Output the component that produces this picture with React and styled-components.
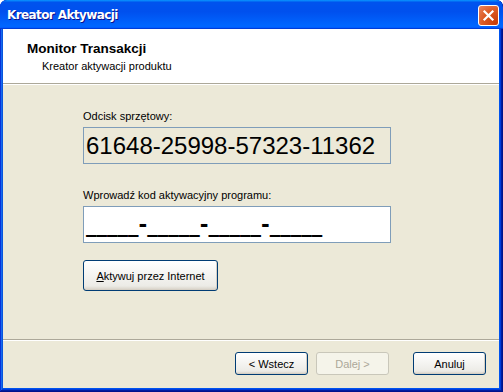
import styled, { createGlobalStyle } from "styled-components"

const Global = createGlobalStyle`
    html, body {
        margin: 0;
        background: #ffffff;
    }
    body {
        font-family: "Liberation Sans", Arial, sans-serif;
        font-size: 11px;
        color: #000;
    }
`

const Window = styled.div`
    width: 503px;
    height: 392px;
    box-sizing: border-box;
    display: flex;
    flex-direction: column;
    background: #0053ee;
    border-radius: 7px 7px 0 0;
    box-shadow: inset -1px -1px #00138c, inset 1px 1px #0831d9, inset -2px -2px #001ea0,
        inset 2px 2px #166aee, inset -3px -3px #003bda, inset 3px 3px #0855dd;
    overflow: hidden;
`

const TitleBar = styled.div`
    height: 29px;
    flex: none;
    display: flex;
    align-items: center;
    padding: 0 4px 0 7px;
    background: linear-gradient(180deg, #0997ff, #0053ee 8%, #0050ee 40%, #06f 88%, #06f 93%, #005bff 95%, #003dd7 96%, #003dd7);
    border-radius: 7px 7px 0 0;
`

const Title = styled.span`
    font-family: "DejaVu Sans", Verdana, sans-serif;
    font-weight: bold;
    font-size: 12px;
    letter-spacing: -0.6px;
    color: #fff;
    text-shadow: 1px 1px #0f1089;
    margin-top: 1px;
`

const Close = styled.div`
    margin-left: auto;
    width: 21px;
    height: 21px;
    box-sizing: border-box;
    border: 1px solid #fff;
    border-radius: 3px;
    background: radial-gradient(circle at 90% 90%, #c83c08 0%, #dc5a24 55%, #ea8560 100%);
    display: flex;
    align-items: center;
    justify-content: center;
    margin-top: 1px;
`

const Client = styled.div`
    flex: 1;
    margin: 0 4px 4px 3px;
    background: #ece9d8;
    display: flex;
    flex-direction: column;
`

const Header = styled.div`
    height: 55px;
    flex: none;
    box-sizing: border-box;
    background: #fff;
    border-bottom: 1px solid #aca899;
    box-shadow: 0 1px 0 #fff;
    padding: 12px 0 0 24px;
    margin-bottom: 1px;
`

const Heading = styled.div`
    font-weight: bold;
    font-size: 13.5px;
    line-height: 16px;
`

const Subheading = styled.div`
    font-size: 11px;
    line-height: 13px;
    margin: 3px 0 0 15px;
`

const Content = styled.div`
    flex: 1;
    display: flex;
    flex-direction: column;
    align-items: flex-start;
    padding: 25px 0 0 80px;
`

const Label = styled.div`
    font-size: 11px;
    line-height: 13px;
    margin-top: ${p => p.$gap || 0}px;
`

const CodeBox = styled.div`
    width: 308px;
    height: 37px;
    box-sizing: border-box;
    margin-top: 4px;
    border: 1px solid #7f9db9;
    background: ${p => (p.$editable ? "#fff" : "#ece9d8")};
    font-size: 24px;
    line-height: ${p => (p.$editable ? 33 : 35)}px;
    padding-left: 2px;
    white-space: pre;
    overflow: hidden;
`

const Mask = styled.span`
    font-family: "DejaVu Sans", Verdana, sans-serif;
    font-size: 21px;
    font-weight: bold;
`

const Button = styled.button`
    width: ${p => p.$w || 73}px;
    height: ${p => p.$h || 23}px;
    margin-left: ${p => p.$ml || 0}px;
    margin-top: ${p => p.$mt || 0}px;
    padding: 0;
    font-family: "Liberation Sans", Arial, sans-serif;
    font-size: 11px;
    color: ${p => (p.disabled ? "#aca899" : "#000")};
    border: 1px solid ${p => (p.disabled ? "#c9c7ba" : "#003c74")};
    border-radius: 3px;
    background: ${p =>
        p.disabled ? "#f5f4ea" : "linear-gradient(180deg, #fff, #ecebe6 86%, #d6d0c5)"};
    box-shadow: ${p => (p.disabled ? "none" : "inset -1px -1px #d6d0c5")};
`

const Footer = styled.div`
    height: 49px;
    flex: none;
    box-sizing: border-box;
    border-top: 1px solid #aca899;
    box-shadow: inset 0 1px 0 #fff;
    display: flex;
    align-items: flex-start;
    justify-content: flex-end;
    padding: 12px 13px 0 0;
`

const CloseIcon = () => (
    <svg width="13" height="13" viewBox="0 0 13 13">
        <path d="M2.5 2.5 L10.5 10.5 M10.5 2.5 L2.5 10.5" stroke="#fff" strokeWidth="2.2" strokeLinecap="square" />
    </svg>
)

export default function App() {
    return (
        <>
            <Global />
            <Window>
                <TitleBar>
                    <Title>Kreator Aktywacji</Title>
                    <Close><CloseIcon /></Close>
                </TitleBar>
                <Client>
                    <Header>
                        <Heading>Monitor Transakcji</Heading>
                        <Subheading>Kreator aktywacji produktu</Subheading>
                    </Header>
                    <Content>
                        <Label>Odcisk sprzętowy:</Label>
                        <CodeBox>61648-25998-57323-11362</CodeBox>
                        <Label $gap={25}>Wprowadź kod aktywacyjny programu:</Label>
                        <CodeBox $editable><Mask>_____-_____-_____-_____</Mask></CodeBox>
                        <Button $w={135} $h={31} $mt={17}>
                            <u>A</u>ktywuj przez Internet
                        </Button>
                    </Content>
                    <Footer>
                        <Button>&lt; Wstecz</Button>
                        <Button $ml={8} disabled>Dalej &gt;</Button>
                        <Button $ml={24}>Anuluj</Button>
                    </Footer>
                </Client>
            </Window>
        </>
    )
}
